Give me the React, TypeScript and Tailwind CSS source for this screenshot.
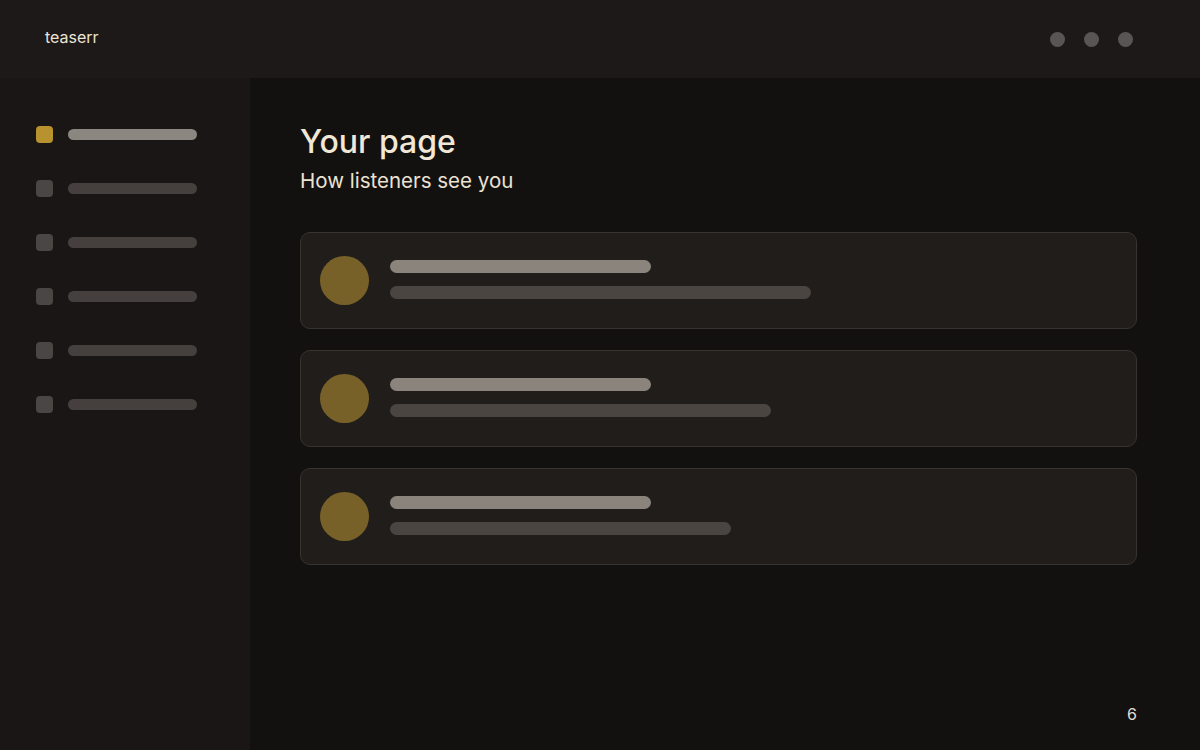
const navItems = [true, false, false, false, false, false];

const cards = [
  { sub: 'w-[421px]' },
  { sub: 'w-[381px]' },
  { sub: 'w-[341px]' },
];

export default function App() {
  return (
    <div
      className="w-[1200px] h-[750px] bg-[#131110] text-[#efe6d6] flex flex-col overflow-hidden"
      style={{ fontFamily: 'Inter, "Noto Sans", sans-serif' }}
    >
      <header className="h-[78px] shrink-0 bg-[#1c1918] flex items-center justify-between pl-[45px] pr-[67px]">
        <span className="text-[16px] text-[#ece4d4] -mt-[5px]">teaserr</span>
        <div className="flex items-center gap-[19px] mt-[1px]">
          <span className="w-[15px] h-[15px] rounded-full bg-[#595553]" />
          <span className="w-[15px] h-[15px] rounded-full bg-[#595553]" />
          <span className="w-[15px] h-[15px] rounded-full bg-[#595553]" />
        </div>
      </header>

      <div className="flex flex-1">
        <aside className="w-[250px] shrink-0 bg-[#191615] pt-[48px] pl-[36px] flex flex-col gap-[37px]">
          {navItems.map((active, i) => (
            <div key={i} className="flex items-center gap-[15px] h-[17px]">
              <span className={`w-[17px] h-[17px] rounded-[4px] ${active ? 'bg-[#b8922e]' : 'bg-[#4a4644]'}`} />
              <span className={`w-[129px] h-[11px] rounded-full ${active ? 'bg-[#8b867f]' : 'bg-[#45403d]'}`} />
            </div>
          ))}
        </aside>

        <main className="flex-1 relative pl-[50px] pr-[63px] pt-[44px]">
          <h1 className="text-[32px] font-medium leading-[40px] text-[#f1e7d6]">Your page</h1>
          <p className="text-[20.5px] leading-[28px] text-[#ebe2d2] mt-[5px]">How listeners see you</p>

          <div className="mt-[37px] flex flex-col gap-[21px]">
            {cards.map((c, i) => (
              <div
                key={i}
                className="h-[97px] rounded-[10px] border border-[#37332f] bg-[#201d1a] flex items-center pl-[19px] gap-[21px]"
              >
                <span className="w-[49px] h-[49px] rounded-full bg-[#786129] shrink-0" />
                <div className="flex flex-col gap-[13px] -mt-[2px]">
                  <span className="w-[261px] h-[13px] rounded-full bg-[#8a847c]" />
                  <span className={`${c.sub} h-[13px] rounded-full bg-[#4a4541]`} />
                </div>
              </div>
            ))}
          </div>

          <span className="absolute right-[63px] bottom-[24px] text-[16px] text-[#e4ddd0]">6</span>
        </main>
      </div>
    </div>
  );
}
